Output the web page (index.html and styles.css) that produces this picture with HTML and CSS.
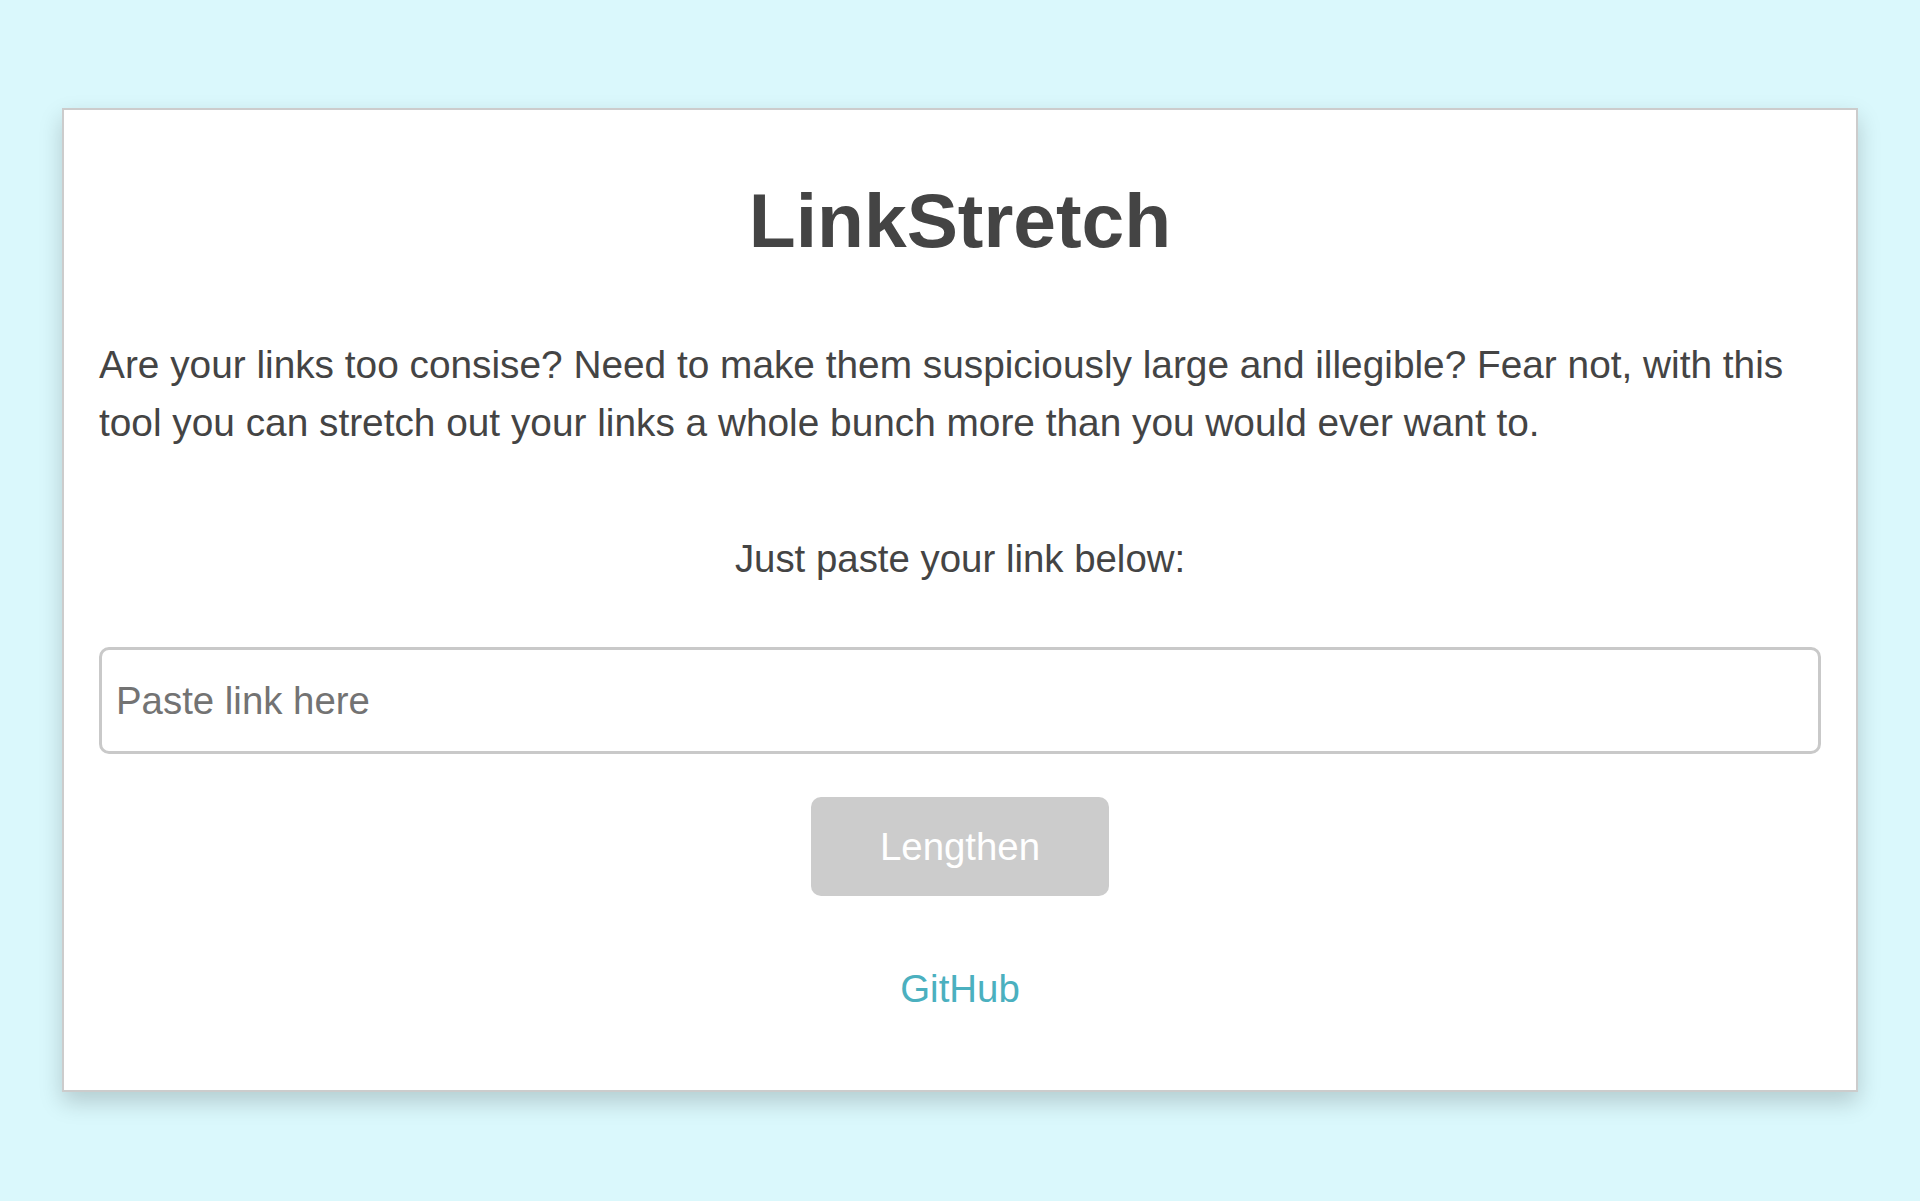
FILE: index.html
```html
<!DOCTYPE html>
<html lang="en">
<head>
<meta charset="utf-8">
<title>LinkStretch</title>
<link rel="stylesheet" href="styles.css">
</head>
<body>
<main class="card">
  <h1 class="title">LinkStretch</h1>
  <p class="intro">Are your links too consise? Need to make them suspiciously large and illegible? Fear not, with this tool you can stretch out your links a whole bunch more than you would ever want to.</p>
  <p class="prompt">Just paste your link below:</p>
  <input class="link-input" type="text" placeholder="Paste link here">
  <div class="actions">
    <button class="btn" type="button">Lengthen</button>
  </div>
  <div class="footer">
    <a class="gh" href="#">GitHub</a>
  </div>
</main>
</body>
</html>
```

FILE: styles.css
```css
* { box-sizing: border-box; }
html, body { margin: 0; padding: 0; }
body {
  background: #daf8fc;
  font-family: "Liberation Sans", Arial, Helvetica, sans-serif;
  color: #444;
  font-size: 38.4px;
  line-height: 50px;
  padding: 108px 62px 109px 62px;
}
.card {
  background: #fff;
  border: 2px solid #cccccc;
  box-shadow: 0 10px 22px rgba(0, 0, 0, 0.18);
  padding: 66px 35px 76px 35px;
  display: flex;
  flex-direction: column;
}
.title {
  margin: 0;
  font-size: 76.8px;
  line-height: 88px;
  font-weight: bold;
  text-align: center;
  color: #444;
}
.intro {
  margin: 72px 0 0 0;
  font-size: 38.8px;
  line-height: 57.6px;
}
.prompt {
  margin: 83px 0 0 0;
  text-align: center;
}
.link-input {
  margin-top: 63px;
  width: 100%;
  height: 107px;
  border: 3px solid #c9c9c9;
  border-radius: 10px;
  padding: 0 14px;
  font-family: inherit;
  font-size: 38.4px;
  color: #444;
  background: #fff;
  outline: none;
}
.link-input::placeholder { color: #737373; }
.actions {
  margin-top: 43px;
  display: flex;
  justify-content: center;
}
.btn {
  width: 298px;
  height: 99px;
  border: none;
  border-radius: 10px;
  background: #cccccc;
  color: #fff;
  font-family: inherit;
  font-size: 38.4px;
  padding: 0;
}
.footer {
  margin-top: 68px;
  text-align: center;
}
.gh {
  color: #4bb0bf;
  text-decoration: none;
}
```
